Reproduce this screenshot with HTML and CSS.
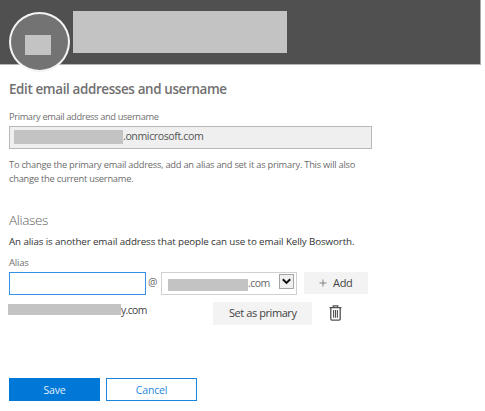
FILE: index.html
```html
<!DOCTYPE html>
<html lang="en">
<head>
<meta charset="utf-8">
<title>Edit email addresses and username</title>
<link rel="stylesheet" href="styles.css">
</head>
<body>
<header class="banner">
  <div class="avatar"><span class="mask avatar-mask"></span></div>
  <div class="mask name-mask"></div>
</header>
<main class="panel">
  <h1 class="title"><span>Edit email addresses and username</span></h1>
  <div class="label primary-label"><span>Primary email address and username</span></div>
  <div class="primary-field"><span class="mask primary-mask"></span><span class="primary-text">.onmicrosoft.com</span></div>
  <p class="help"><span class="help-one">To change the primary email address, add an alias and set it as primary. This will also</span><br><span class="help-two">change the current username.</span></p>
  <h2 class="subtitle"><span>Aliases</span></h2>
  <p class="intro"><span>An alias is another email address that people can use to email Kelly Bosworth.</span></p>
  <div class="label alias-label"><span>Alias</span></div>
  <div class="alias-row">
    <div class="alias-input"></div>
    <span class="at">@</span>
    <div class="select">
      <span class="mask domain-mask"></span><span class="domain">.com</span>
      <span class="arrow"><svg width="9" height="7" viewBox="0 0 9 7"><path d="M.8 1.2 4.5 4.9 8.2 1.2" fill="none" stroke="#111" stroke-width="2"/></svg></span>
    </div>
    <div class="button add"><svg width="8" height="8" viewBox="0 0 8 8"><path d="M4 .5v7M.5 4h7" stroke="#777" stroke-width=".9"/></svg><span class="add-text">Add</span></div>
  </div>
  <div class="entry-row">
    <div class="entry"><span class="mask entry-mask"></span><span class="entry-text">y.com</span></div>
    <div class="button set"><span class="set-text">Set as primary</span></div>
    <svg class="trash" width="13" height="16" viewBox="0 0 13 16"><path d="M4.3 2.5V.8h4.4v1.7M.5 2.7h12M1.8 3v11.1q0 1 1 1h7.4q1 0 1-1V3" fill="none" stroke="#505050" stroke-width="1.3"/><path d="M4.6 5v7.7M6.5 5v7.7M8.4 5v7.7" stroke="#505050" stroke-width="1.1"/></svg>
  </div>
  <div class="actions">
    <div class="action save"><span>Save</span></div>
    <div class="action cancel"><span>Cancel</span></div>
  </div>
</main>
</body>
</html>
```
FILE: styles.css
```css
* { box-sizing: border-box; }
body { margin: 0; width: 485px; height: 411px; overflow: hidden; background: #fff; font-family: "Open Sans", "Noto Sans", sans-serif; color: #444; }
span { white-space: nowrap; }
svg { display: block; flex: none; }
.mask { display: block; flex: none; background: #c3c3c3; }
.banner { display: flex; align-items: flex-start; width: 481px; height: 65px; padding-left: 9px; background: #505050; border-right: 1px solid #aaa; border-bottom: 1px solid #b5b5b5; }
.avatar { flex: none; width: 61px; height: 60px; margin-top: 12px; border: 2px solid #f4f4f4; border-radius: 50%; background: #737373; padding: 21px 0 0 14px; }
.avatar-mask { width: 26px; height: 20px; }
.name-mask { width: 214px; height: 42px; margin: 11px 0 0 3px; }
.panel { padding-left: 9px; }
h1, h2, p { margin: 0; font-weight: 400; }
.title { height: 20px; margin-top: 14px; font-size: 13.4px; line-height: 20px; font-weight: 600; color: #707070; letter-spacing: -.36px; }
.label { height: 14px; font-size: 9.5px; line-height: 14px; color: #707070; letter-spacing: -.2px; }
.primary-label { margin-top: 11px; font-size: 9.3px; letter-spacing: -.37px; }
.primary-field { display: flex; width: 363px; height: 23px; margin-top: 2px; border: 1px solid #b3bab8; background: #efefef; }
.primary-mask { width: 109px; height: 14px; margin: 3px 0 0 4px; }
.primary-text { font-size: 10.6px; line-height: 18px; color: #555; letter-spacing: -.4px; }
.help { height: 28px; margin-top: 9px; font-size: 9.3px; line-height: 14px; color: #6c6c6c; letter-spacing: -.24px; }
.subtitle { height: 20px; margin-top: 24px; font-size: 13.5px; line-height: 20px; color: #606060; font-weight: 300; letter-spacing: -.35px; }
.intro { height: 14px; margin-top: 5px; font-size: 9.8px; line-height: 14px; color: #333; letter-spacing: -.12px; }
.alias-label { margin-top: 7px; }
.alias-row { display: flex; height: 23px; margin-top: 2px; }
.alias-input { width: 137px; height: 23px; border: 1px solid #3492e6; }
.at { width: 15px; padding-left: 2px; font-size: 10.5px; line-height: 21px; color: #666; }
.select { display: flex; width: 136px; height: 23px; border: 1px solid #d0d0d0; }
.domain-mask { width: 80px; height: 12px; margin: 6px 0 0 6px; }
.domain { width: 30px; font-size: 10.5px; line-height: 20px; color: #666; letter-spacing: -.5px; }
.arrow { display: flex; align-items: center; justify-content: center; width: 15px; height: 15px; margin: 1px 0 0 1px; border: 1px solid #a5a5a5; background: #f0f0f0; }
.button { background: #f3f3f3; color: #444; font-size: 11px; line-height: 22px; }
.add { display: flex; width: 64px; height: 22px; margin-left: 7px; padding-left: 15px; letter-spacing: -.3px; }
.add svg { margin: 7px 6px 0 0; }
.entry-row { display: flex; height: 23px; margin: 7px 0 0 -1px; }
.entry { display: flex; width: 205px; }
.entry-mask { width: 113px; height: 11px; margin-top: 2px; }
.entry-text { font-size: 10.4px; line-height: 16px; letter-spacing: -.6px; }
.set { width: 99px; height: 23px; padding-left: 16px; letter-spacing: -.43px; }
.trash { margin: 3px 0 0 17px; }
.actions { display: flex; gap: 6px; margin-top: 53px; }
.action { width: 91px; height: 23px; text-align: center; font-size: 10.5px; line-height: 22px; border: 1px solid #1b85dc; color: #2387dc; letter-spacing: -.2px; }
.save { background: #0078d7; border-color: #0078d7; color: #e0effb; }
```
